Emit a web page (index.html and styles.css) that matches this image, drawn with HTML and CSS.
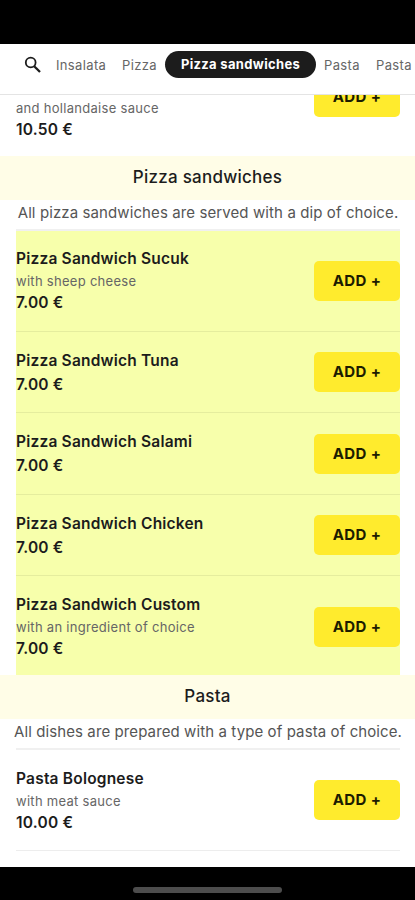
FILE: index.html
```html
<!DOCTYPE html>
<html lang="en">
<head>
<meta charset="utf-8">
<meta name="viewport" content="width=device-width, initial-scale=1">
<title>Menu</title>
<link rel="stylesheet" href="styles.css">
</head>
<body>
<div class="phone">
  <div class="status-bar"></div>
  <nav class="categories">
    <svg class="search" viewBox="0 0 18 18" fill="none" stroke="#1c1c1c"><circle cx="6.7" cy="6.5" r="4.9" stroke-width="1.8"/><path d="M10.2 10.2L16 16" stroke-width="2.3"/></svg>
    <a class="tab insalata">Insalata</a>
    <a class="tab pizza">Pizza</a>
    <a class="tab active"><span>Pizza sandwiches</span></a>
    <a class="tab pasta">Pasta</a>
    <a class="tab">Pasta</a>
  </nav>
  <main class="menu">
    <div class="list previous">
      <article class="item">
        <div class="info"><p>and hollandaise sauce</p><strong>10.50 €</strong></div>
        <button class="add">ADD +</button>
      </article>
    </div>
    <h2>Pizza sandwiches</h2>
    <p class="note"><span>All pizza sandwiches are served with a dip of choice.</span></p>
    <div class="list highlighted">
      <article class="item tall">
        <div class="info"><h3>Pizza Sandwich Sucuk</h3><p>with sheep cheese</p><strong>7.00 €</strong></div>
        <button class="add">ADD +</button>
      </article>
      <article class="item">
        <div class="info"><h3>Pizza Sandwich Tuna</h3><strong>7.00 €</strong></div>
        <button class="add">ADD +</button>
      </article>
      <article class="item">
        <div class="info"><h3>Pizza Sandwich Salami</h3><strong>7.00 €</strong></div>
        <button class="add">ADD +</button>
      </article>
      <article class="item">
        <div class="info"><h3>Pizza Sandwich Chicken</h3><strong>7.00 €</strong></div>
        <button class="add">ADD +</button>
      </article>
      <article class="item tall last">
        <div class="info"><h3>Pizza Sandwich Custom</h3><p>with an ingredient of choice</p><strong>7.00 €</strong></div>
        <button class="add">ADD +</button>
      </article>
    </div>
    <h2>Pasta</h2>
    <p class="note"><span>All dishes are prepared with a type of pasta of choice.</span></p>
    <div class="list">
      <article class="item tall">
        <div class="info"><h3>Pasta Bolognese</h3><p>with meat sauce</p><strong>10.00 €</strong></div>
        <button class="add">ADD +</button>
      </article>
    </div>
  </main>
  <footer class="home-bar"><div class="indicator"></div></footer>
</div>
</body>
</html>
```
FILE: styles.css
```css
* { box-sizing: border-box; margin: 0; padding: 0; }
body { background: #fff; font-family: Inter, "Liberation Sans", sans-serif; color: #1c1c1c; overflow: hidden; }
.phone { width: 415px; height: 900px; display: flex; flex-direction: column; overflow: hidden; }
.status-bar { height: 44px; background: #000; flex: none; }
.categories { height: 51px; flex: none; display: flex; align-items: flex-start; padding: 7px 0 0 24px; border-bottom: 1px solid #e4e4e4; overflow: hidden; white-space: nowrap; }
.search { width: 18px; height: 18px; margin: 5px 14px 0 0; flex: none; }
.tab { flex: none; height: 28px; line-height: 28px; font-size: 13px; color: #666; letter-spacing: .35px; }
.insalata { width: 66px; }
.pizza { width: 43px; }
.active { width: 151px; height: 27px; line-height: 27px; margin-right: 8px; border-radius: 14px; background: #1c1c1c; color: #fff; font-weight: 700; letter-spacing: .33px; text-align: center; }
.pasta { width: 52px; }
.menu { height: 772px; flex: none; overflow: hidden; }
.list { margin: 0 15px 0 16px; }
.item { height: 81.4px; display: flex; align-items: center; justify-content: space-between; border-bottom: 1px solid rgba(0, 0, 0, .07); }
.item.tall { height: 101.5px; }
.item.tall.last { height: 99px; border-bottom: 0; padding-top: 2px; }
.info { display: flex; flex-direction: column; padding-top: 1.4px; }
h3, strong { font-size: 15.5px; line-height: 24px; font-weight: 600; letter-spacing: .2px; }
.info p { font-size: 13px; line-height: 20px; color: #666; letter-spacing: .29px; }
.add { width: 86px; height: 40px; flex: none; border: 0; border-radius: 5px; background: #ffeb2d; color: #1c1c00; font: 700 15px/40px Inter, "Liberation Sans", sans-serif; letter-spacing: .35px; }
.previous { height: 61px; display: flow-root; }
.previous .item { height: 101px; margin-top: -49px; border: 0; }
.previous .info { padding-top: 46px; }
h2 { height: 43.5px; font-size: 17px; line-height: 42px; font-weight: 500; text-align: center; letter-spacing: .24px; background: #fffde7; }
.note { height: 31px; line-height: 25px; font-size: 15px; color: #555; letter-spacing: .1px; white-space: nowrap; margin: 0 15px 0 16px; border-bottom: 2px solid #f0f0f0; display: flex; justify-content: center; }
.highlighted { background: #f7ffab; }
.home-bar { flex: 1; background: #000; display: flex; justify-content: center; align-items: flex-start; padding-top: 20px; }
.indicator { width: 149px; height: 6px; border-radius: 3px; background: #4d4d4d; }
```
